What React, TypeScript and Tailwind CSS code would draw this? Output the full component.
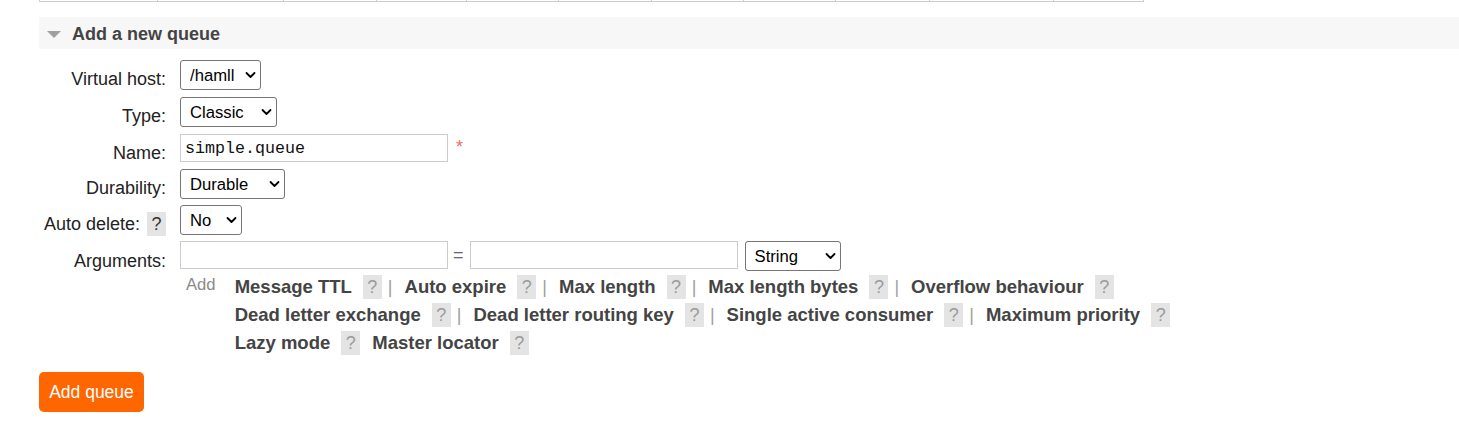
import React from "react";

const SANS = "font-['Liberation_Sans',Arial,sans-serif]";
const MONO = "font-['Liberation_Mono','Courier_New',monospace]";

const tableCols = [118, 126, 93, 90, 92, 93, 92, 92, 94, 124, 91];

function Chevron() {
  return (
    <svg
      className="absolute right-[5px] top-1/2 -translate-y-1/2 pointer-events-none"
      width="11"
      height="7"
      viewBox="0 0 11 7"
      fill="none"
    >
      <path d="M1.5 1.5 L5.5 5.5 L9.5 1.5" stroke="#000" strokeWidth="1.8" strokeLinecap="round" strokeLinejoin="round" />
    </svg>
  );
}

function Select({ width, value }: { width: string; value: string }) {
  return (
    <div className={`relative h-[30px] ${width}`}>
      <select
        defaultValue={value}
        className={`appearance-none w-full h-full border border-[#767676] rounded-[3px] bg-white pl-[9px] pr-[18px] text-[16.67px] text-black outline-none ${SANS}`}
      >
        <option>{value}</option>
      </select>
      <Chevron />
    </div>
  );
}

function TextInput({ value }: { value?: string }) {
  return (
    <input
      type="text"
      defaultValue={value}
      className={`w-[268px] h-[28px] border border-[#cccccc] bg-white px-[4px] text-[16.67px] text-[#111] outline-none ${MONO}`}
    />
  );
}

function Help({ dark }: { dark?: boolean }) {
  return (
    <span
      className={`inline-flex w-[19px] h-[24px] items-center justify-center bg-[#e4e4e4] text-[18px] leading-[24px] font-normal ${
        dark ? "text-[#333]" : "text-[#9a9a9a]"
      }`}
    >
      ?
    </span>
  );
}

type Item = { label: string; pipe: boolean };

const linkLines: Item[][] = [
  [
    { label: "Message TTL", pipe: true },
    { label: "Auto expire", pipe: true },
    { label: "Max length", pipe: true },
    { label: "Max length bytes", pipe: true },
    { label: "Overflow behaviour", pipe: false },
  ],
  [
    { label: "Dead letter exchange", pipe: true },
    { label: "Dead letter routing key", pipe: true },
    { label: "Single active consumer", pipe: true },
    { label: "Maximum priority", pipe: false },
  ],
  [
    { label: "Lazy mode", pipe: false },
    { label: "Master locator", pipe: false },
  ],
];

function Row({
  height,
  pt,
  label,
  children,
  help,
}: {
  height: string;
  pt: string;
  label: string;
  children: React.ReactNode;
  help?: boolean;
}) {
  return (
    <div className={`flex ${height}`}>
      <div className={`w-[127px] flex justify-end items-start ${pt}`}>
        <span className={`text-[18px] text-[#222] whitespace-nowrap ${help ? "leading-[24px]" : "leading-[20px]"}`}>
          {label}
        </span>
        {help && (
          <span className="ml-[7px]">
            <Help dark />
          </span>
        )}
      </div>
      <div className="ml-[14px] flex items-start">{children}</div>
    </div>
  );
}

export default function App() {
  return (
    <div className={`min-h-screen bg-white pl-[39px] ${SANS}`}>
      {/* remnant of table above */}
      <div className="flex h-[2px]">
        {tableCols.map((w, i) => (
          <div
            key={i}
            style={{ width: w }}
            className={`h-[2px] border-l border-b border-[#cccccc] ${i === tableCols.length - 1 ? "border-r" : ""}`}
          />
        ))}
      </div>

      {/* section header */}
      <div className="mt-[15px] h-[32px] bg-[#f7f7f7] flex items-center pt-[2px] pl-[8px]">
        <svg width="14" height="7" viewBox="0 0 14 7">
          <polygon points="0,0 14,0 7,7" fill="#a0a0a0" />
        </svg>
        <span className="ml-[11px] text-[18px] font-bold text-[#444] leading-[20px]">Add a new queue</span>
      </div>

      {/* form */}
      <div className="mt-[11px] flex flex-col">
        <Row height="h-[37px]" pt="pt-[9px]" label="Virtual host:">
          <Select width="w-[81px]" value="/hamll" />
        </Row>
        <Row height="h-[37px]" pt="pt-[9px]" label="Type:">
          <Select width="w-[97px]" value="Classic" />
        </Row>
        <Row height="h-[35px]" pt="pt-[9px]" label="Name:">
          <TextInput value="simple.queue" />
          <span className="ml-[8px] mt-[3px] text-[18px] leading-[20px] text-[#ee6b6b]">*</span>
        </Row>
        <Row height="h-[36px]" pt="pt-[9px]" label="Durability:">
          <Select width="w-[105px]" value="Durable" />
        </Row>
        <Row height="h-[36px]" pt="pt-[7px]" label="Auto delete:" help>
          <Select width="w-[62px]" value="No" />
        </Row>
        <Row height="h-[32px]" pt="pt-[10px]" label="Arguments:">
          <TextInput />
          <span className="ml-[5px] mr-[6px] text-[18px] leading-[28px] text-[#666]">=</span>
          <TextInput />
          <div className="ml-[7px]">
            <Select width="w-[96px]" value="String" />
          </div>
        </Row>

        {/* argument links */}
        <div className="flex">
          <div className="w-[127px]" />
          <div className="ml-[14px] flex items-start">
            <span className="ml-[6px] text-[16.67px] leading-[24px] text-[#8a8a8a]">Add</span>
            <div className="ml-[19px] flex flex-col">
              {linkLines.map((line, li) => (
                <div key={li} className="flex items-center h-[28px] whitespace-nowrap">
                  {line.map((it, i) => (
                    <React.Fragment key={i}>
                      <span className={`text-[18.5px] font-bold text-[#444] leading-[28px] ${i > 0 ? "ml-[12px]" : ""}`}>
                        {it.label}
                      </span>
                      <span className="ml-[11px] flex">
                        <Help />
                      </span>
                      {it.pipe && <span className="ml-[6px] text-[18px] leading-[28px] text-[#a0a0a0]">|</span>}
                    </React.Fragment>
                  ))}
                </div>
              ))}
            </div>
          </div>
        </div>
      </div>

      <button className="mt-[15px] w-[105px] h-[40px] rounded-[5px] bg-[#ff6600] text-white text-[17.5px] leading-[20px] flex items-center justify-center">
        Add queue
      </button>
    </div>
  );
}
